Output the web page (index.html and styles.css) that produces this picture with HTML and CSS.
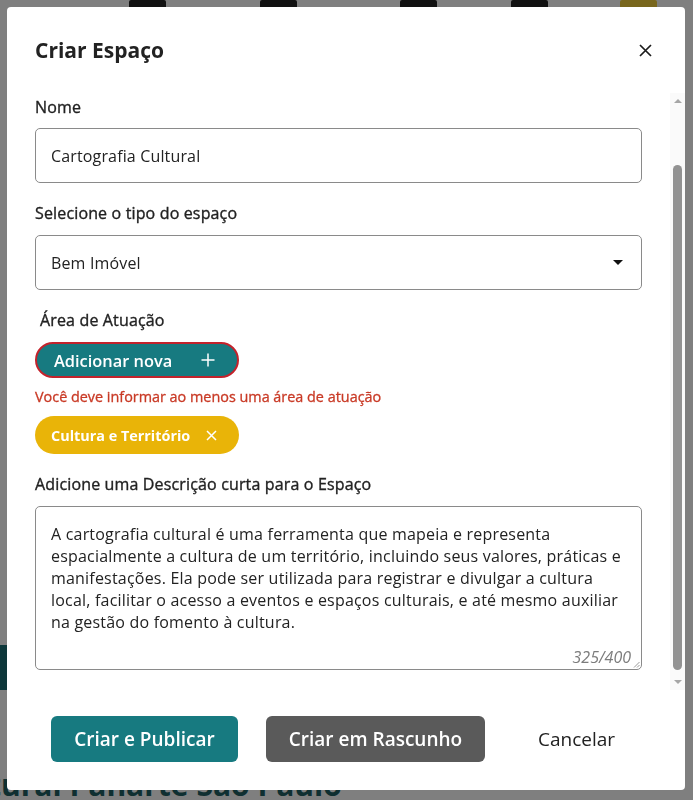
FILE: index.html
```html
<!DOCTYPE html>
<html lang="pt-BR">
<head>
<meta charset="utf-8">
<title>Criar Espaço</title>
<link rel="stylesheet" href="styles.css">
</head>
<body>
<div class="page">
  <header class="page-header">
    <span class="hicon"></span>
    <span class="hicon"></span>
    <span class="hicon"></span>
    <span class="hicon"></span>
    <span class="hicon hicon-yellow"></span>
  </header>
  <main class="page-main">
    <div class="hero-bar"></div>
  </main>
  <h1 class="page-title">Cultural Panarte São Paulo</h1>
</div>
<div class="overlay"></div>

<div class="modal" role="dialog" aria-labelledby="modal-title">
  <div class="modal-header">
    <h2 id="modal-title" class="modal-title">Criar Espaço</h2>
    <button class="close-btn" aria-label="Fechar">
      <svg width="13" height="13" viewBox="0 0 13 13"><path d="M1 1L12 12M12 1L1 12" stroke="#1c1c1c" stroke-width="1.7" fill="none"/></svg>
    </button>
  </div>

  <div class="modal-body">
    <div class="form">
      <label class="field-label">Nome</label>
      <div class="input">Cartografia Cultural</div>

      <label class="field-label field-gap">Selecione o tipo do espaço</label>
      <div class="input select">
        <span>Bem Imóvel</span>
        <svg width="10" height="5" viewBox="0 0 10 5"><path d="M0 0H10L5 5Z" fill="#111"/></svg>
      </div>

      <label class="field-label field-gap indent">Área de Atuação</label>
      <button class="add-btn">
        <span>Adicionar nova</span>
        <svg width="14" height="14" viewBox="0 0 14 14"><path d="M7 0.5V13.5M0.5 7H13.5" stroke="#fff" stroke-width="1.5" fill="none"/></svg>
      </button>
      <p class="error">Você deve informar ao menos uma área de atuação</p>
      <div class="chip">
        <span>Cultura e Território</span>
        <svg width="11" height="11" viewBox="0 0 11 11"><path d="M1 1L10 10M10 1L1 10" stroke="#fff" stroke-width="1.5" fill="none"/></svg>
      </div>

      <label class="field-label field-gap">Adicione uma Descrição curta para o Espaço</label>
      <div class="textarea">
        <p class="textarea-text">A cartografia cultural é uma ferramenta que mapeia e representa<br>espacialmente a cultura de um território, incluindo seus valores, práticas e<br>manifestações. Ela pode ser utilizada para registrar e divulgar a cultura<br>local, facilitar o acesso a eventos e espaços culturais, e até mesmo auxiliar<br>na gestão do fomento à cultura.</p>
        <span class="counter">325/400</span>
        <svg class="resize" width="7" height="7" viewBox="0 0 7 7"><path d="M6.5 1L1 6.5M6.5 4L4 6.5" stroke="#9a9a9a" stroke-width="1" fill="none"/></svg>
      </div>
    </div>

    <div class="scrollbar" aria-hidden="true">
      <div class="sb-arrow"><svg width="8" height="4" viewBox="0 0 8 4"><path d="M0 4H8L4 0Z" fill="#a6a6a6"/></svg></div>
      <div class="sb-track"><div class="sb-thumb"></div></div>
      <div class="sb-arrow"><svg width="8" height="4" viewBox="0 0 8 4"><path d="M0 0H8L4 4Z" fill="#a6a6a6"/></svg></div>
    </div>
  </div>

  <div class="modal-footer">
    <button class="btn btn-primary">Criar e Publicar</button>
    <button class="btn btn-dark">Criar em Rascunho</button>
    <button class="btn btn-text">Cancelar</button>
  </div>
</div>
</body>
</html>
```

FILE: styles.css
```css
* { box-sizing: border-box; }

html, body {
  margin: 0;
  padding: 0;
  height: 800px;
  overflow: hidden;
}

body {
  font-family: "Open Sans", "Noto Sans", sans-serif;
  color: #222;
  background: #fff;
}

/* ---------- background page ---------- */
.page {
  display: flex;
  flex-direction: column;
  height: 800px;
}

.page-header {
  display: flex;
  height: 40px;
  padding-left: 129px;
  background: #fff;
}

.hicon {
  width: 37px;
  height: 36px;
  background: #222;
  border-radius: 2px;
}
.hicon:nth-child(2) { margin-left: 94px; }
.hicon:nth-child(3) { margin-left: 103px; }
.hicon:nth-child(4) { margin-left: 74px; }
.hicon:nth-child(5) { margin-left: 72px; }
.hicon-yellow { background: #f0cd3a; }

.page-main {
  height: 734px;
}

.hero-bar {
  margin-top: 605px;
  width: 300px;
  height: 45px;
  background: #1a6f75;
}

.page-title {
  margin: 0 0 0 -60px;
  font-size: 30px;
  line-height: 30px;
  font-weight: 700;
  color: #1f5f63;
  white-space: nowrap;
}

.overlay {
  position: fixed;
  inset: 0;
  background: rgba(0, 0, 0, 0.5);
}

/* ---------- modal ---------- */
.modal {
  position: fixed;
  left: 7px;
  top: 7px;
  width: 678px;
  height: 783px;
  background: #fff;
  border-radius: 4px;
  display: flex;
  flex-direction: column;
  overflow: hidden;
}

.modal-header {
  height: 86px;
  flex: none;
  display: flex;
  align-items: flex-start;
  justify-content: space-between;
  padding: 29px 28px 0 28px;
}

.modal-title {
  margin: 0;
  font-size: 21px;
  line-height: 28px;
  font-weight: 700;
  color: #222;
}

.close-btn {
  margin: 8px 5px 0 0;
  padding: 0;
  border: 0;
  background: none;
  width: 13px;
  height: 13px;
  display: flex;
}

.modal-body {
  flex: 1;
  display: flex;
  min-height: 0;
}

.form {
  flex: 1;
  display: flex;
  flex-direction: column;
  align-items: flex-start;
  padding: 3px 28px 0 28px;
}

.field-label {
  display: block;
  font-size: 16px;
  line-height: 22px;
  font-weight: 400;
  -webkit-text-stroke: 0.35px #222;
  letter-spacing: 0.15px;
  color: #222;
  margin-bottom: 10px;
}

.field-gap {
  margin-top: 19px;
  margin-bottom: 11px;
}

.indent { padding-left: 5px; }

.input {
  width: 100%;
  height: 55px;
  border: 1px solid #8a8a8a;
  border-radius: 5px;
  padding: 0 15px;
  display: flex;
  align-items: center;
  justify-content: space-between;
  font-size: 16px;
  letter-spacing: 0.15px;
  color: #222;
}

.select svg { margin-right: 3px; }

.add-btn {
  width: 204px;
  height: 36px;
  border: 2px solid #c3232c;
  border-radius: 18px;
  background: #177a80;
  color: #fff;
  font-family: inherit;
  font-size: 16.4px;
  font-weight: 600;
  display: flex;
  align-items: center;
  justify-content: space-between;
  padding: 0 22px 0 17px;
}

.error {
  margin: 10px 0 10px 0;
  font-size: 14.4px;
  line-height: 18px;
  font-weight: 400;
  -webkit-text-stroke: 0.3px #c93a26;
  color: #c93a26;
}

.chip {
  width: 204px;
  height: 38px;
  border-radius: 19px;
  background: #e9b408;
  color: #fff;
  font-size: 14.4px;
  font-weight: 700;
  display: flex;
  align-items: center;
  justify-content: space-between;
  padding: 0 22px 0 16px;
}

.textarea {
  position: relative;
  width: 100%;
  height: 164px;
  border: 1px solid #8a8a8a;
  border-radius: 5px;
  padding: 16px 15px 0 15px;
}

.textarea-text {
  margin: 0;
  font-size: 16px;
  line-height: 22px;
  letter-spacing: 0.2px;
  color: #222;
  white-space: nowrap;
}

.counter {
  position: absolute;
  right: 10px;
  bottom: 1px;
  font-size: 16px;
  line-height: 22px;
  font-style: italic;
  color: #7c7c7c;
}

.resize {
  position: absolute;
  right: 1px;
  bottom: 1px;
}

/* fake scrollbar */
.scrollbar {
  width: 15px;
  flex: none;
  display: flex;
  flex-direction: column;
  background: #fafafa;
}

.sb-arrow {
  height: 16px;
  display: flex;
  align-items: center;
  justify-content: center;
}

.sb-track {
  flex: 1;
  display: flex;
  flex-direction: column;
  padding-top: 56px;
}

.sb-thumb {
  width: 9px;
  height: 505px;
  margin-left: 3px;
  border-radius: 5px;
  background: #929292;
}

/* footer */
.modal-footer {
  height: 100px;
  flex: none;
  display: flex;
  align-items: flex-start;
  gap: 28px;
  padding: 26px 0 0 44px;
}

.btn {
  height: 46px;
  border: 0;
  border-radius: 6px;
  font-family: inherit;
  font-size: 19px;
  font-weight: 600;
  padding: 0;
  color: #fff;
}

.btn-primary { background: #177a80; width: 187px; }
.btn-dark { background: #5a5a5a; width: 219px; }
.btn-text {
  background: none;
  color: #222;
  padding: 0 0 0 25px;
  font-weight: 500;
}
```
